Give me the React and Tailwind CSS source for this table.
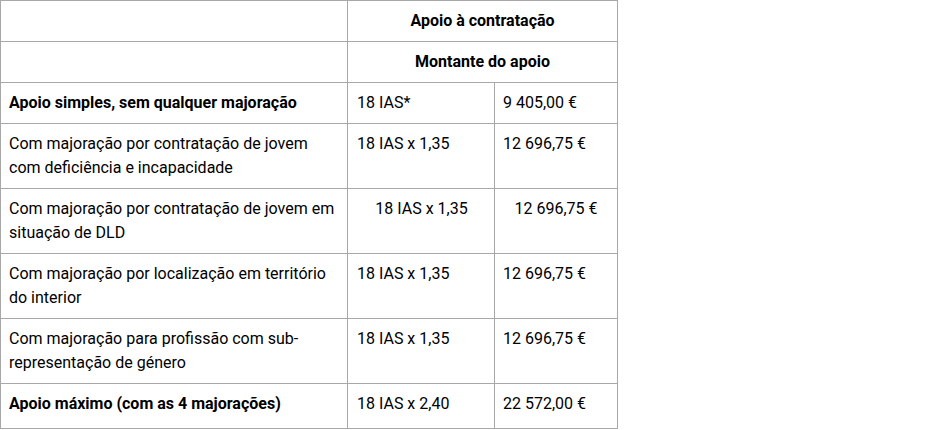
import React from "react";

const rows = [
  { label: "Apoio simples, sem qualquer majoração", ias: "18 IAS*", value: "9 405,00 €", bold: true },
  { label: "Com majoração por contratação de jovem com deficiência e incapacidade", ias: "18 IAS x 1,35", value: "12 696,75 €" },
  { label: "Com majoração por contratação de jovem em situação de DLD", ias: "18 IAS x 1,35", value: "12 696,75 €", center: true },
  { label: "Com majoração por localização em território do interior", ias: "18 IAS x 1,35", value: "12 696,75 €" },
  { label: "Com majoração para profissão com sub-representação de género", ias: "18 IAS x 1,35", value: "12 696,75 €" },
  { label: "Apoio máximo (com as 4 majorações)", ias: "18 IAS x 2,40", value: "22 572,00 €", bold: true, last: true },
];

const cell = "border border-[#a8a8a8] align-top px-2 py-2";

const App = () => {
  return (
    <div className="w-[950px] h-[430px] bg-white text-[16px] leading-6 text-black font-['Roboto',sans-serif]">
      <table className="border-collapse table-fixed w-[617px]">
        <colgroup>
          <col className="w-[347px]" />
          <col className="w-[147px]" />
          <col className="w-[123px]" />
        </colgroup>
        <thead>
          <tr className="h-[41px]">
            <th className={cell}></th>
            <th colSpan={2} className={`${cell} text-center font-bold`}>
              Apoio à contratação
            </th>
          </tr>
          <tr className="h-[41px]">
            <th className={cell}></th>
            <th colSpan={2} className={`${cell} text-center font-bold`}>
              Montante do apoio
            </th>
          </tr>
        </thead>
        <tbody>
          {rows.map((r, i) => (
            <tr key={i} className={r.bold ? (r.last ? "h-[45px]" : "h-[41px]") : "h-[65px]"}>
              <td className={`${cell} ${r.bold ? "font-bold" : ""}`}>{r.label}</td>
              <td className={`${cell} pl-[9px] ${r.center ? "text-center" : ""}`}>{r.ias}</td>
              <td className={`${cell} ${r.center ? "text-center" : ""}`}>{r.value}</td>
            </tr>
          ))}
        </tbody>
      </table>
    </div>
  );
};

export default App;
